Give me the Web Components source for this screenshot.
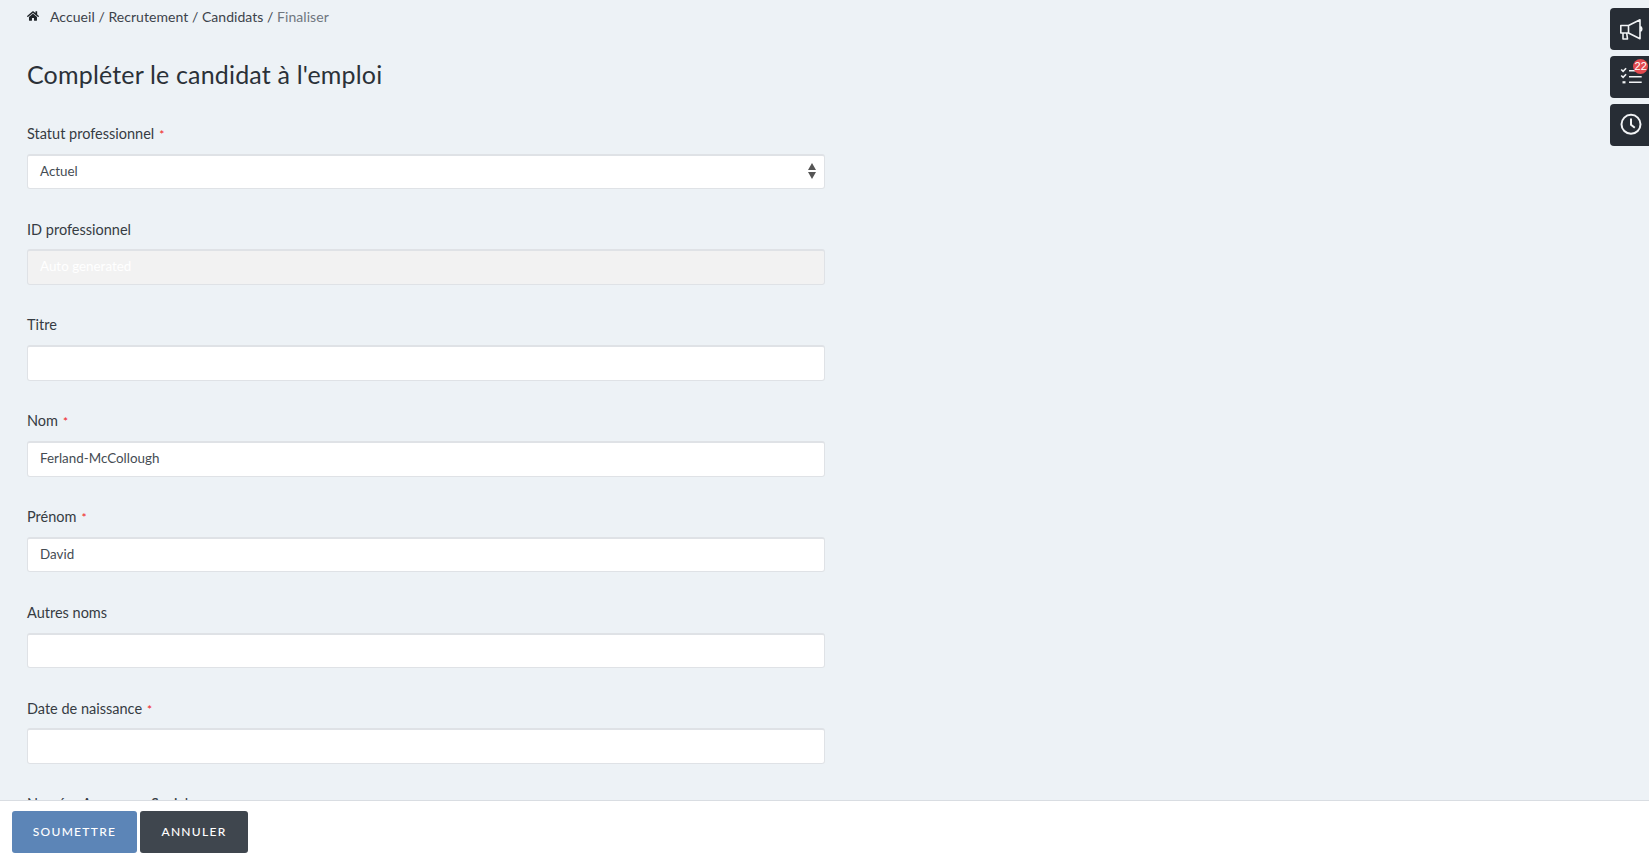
<!DOCTYPE html>
<html lang="fr"><head><meta charset="utf-8"><title>Compléter le candidat</title>
<style>
html,body{margin:0;height:100%;overflow:hidden;background:#edf2f6;font-family:Lato,"Open Sans",sans-serif;color:#2f353c}
</style></head><body>
<app-shell>
<bread-crumbs></bread-crumbs>
<h1>Compléter le candidat à l'emploi</h1>
<form-field label="Statut professionnel" required type="select" value="Actuel"></form-field>
<form-field label="ID professionnel" type="disabled" value="Auto generated"></form-field>
<form-field label="Titre"></form-field>
<form-field label="Nom" required value="Ferland-McCollough"></form-field>
<form-field label="Prénom" required value="David"></form-field>
<form-field label="Autres noms"></form-field>
<form-field label="Date de naissance" required></form-field>
<form-field label="Numéro Assurance Sociale"></form-field>
<side-tabs></side-tabs>
<action-bar></action-bar>
</app-shell>
<script>
const def=(n,html,init)=>customElements.define(n,class extends HTMLElement{connectedCallback(){if(this.shadowRoot)return;const r=this.attachShadow({mode:'open'});r.innerHTML=html;init&&init(this,r)}});
def('app-shell',`<style>:host{display:block;height:855px;overflow:hidden;position:relative}
main{display:flex;flex-direction:column;width:798px;padding:0 0 0 27px}
::slotted(h1){font:400 25px/30px Lato,sans-serif;margin:0 0 34.8px;letter-spacing:.17px;color:#2b3138}
</style><main><slot></slot></main>`);
def('bread-crumbs',`<style>:host{display:flex;align-items:center;height:32px;font-size:14px;letter-spacing:.05px;color:#3c434b;margin-bottom:27px}
svg{width:12px;height:12px;margin-right:11px;fill:#1f2428}.l{color:#6f767e}</style>
<svg viewBox="0 0 576 512"><path d="M280 148 95 300v164c0 9 7 16 16 16l112-.3c9 0 16-7 16-16V368c0-9 7-16 16-16h64c9 0 16 7 16 16v96c0 9 7 16 16 16l112 .3c9 0 16-7 16-16V300L296 148c-4-4-12-4-16 0zM572 251l-84-69V44c0-7-5-12-12-12h-56c-7 0-12 5-12 12v72l-90-74c-18-14-43-14-61 0L4 251c-5 4-6 12-2 17l26 31c4 5 12 6 17 2L280 107c4-4 12-4 16 0l235 194c5 4 13 3 17-2l26-31c4-6 3-13-2-17z"/></svg>
<span>Accueil / Recrutement / Candidats / <span class="l">Finaliser</span></span>`);
def('form-field',`<style>:host{display:block;height:95.8px}
.lab{font-size:14.5px;line-height:20px;height:20px;margin-bottom:9.8px;color:#363c43;display:flex;gap:5px}
.req{color:#f01818;font-size:12px;line-height:21px}
.box{box-sizing:border-box;height:35.6px;background:#fff;border:1px solid #dfe2e6;border-top-width:2px;border-radius:3px;padding:0 12px;font-size:13.4px;line-height:31.6px;color:#454c53;position:relative}
.box.disabled{background:#f2f2f2;color:#fff}
svg{position:absolute;right:8px;top:7px;width:8px;height:16px;fill:#555}
</style><div class="lab"><span id="t"></span><span class="req" id="r" hidden>*</span></div><div class="box" id="b"><span id="v"></span></div>`,(h,r)=>{
r.getElementById('t').textContent=h.getAttribute('label');
if(h.hasAttribute('required'))r.getElementById('r').hidden=false;
r.getElementById('v').textContent=h.getAttribute('value')||'';
const ty=h.getAttribute('type'),b=r.getElementById('b');
if(ty)b.classList.add(ty);
if(ty==='select')b.insertAdjacentHTML('beforeend','<svg viewBox="0 0 8 16"><path d="M4 0 8 7H0zM0 9h8l-4 7z"/></svg>');
});
def('side-tabs',`<style>:host{position:absolute;right:0;top:8px;display:flex;flex-direction:column;gap:6px;width:39px}
.t{height:42px;background:#272d35;border-radius:4px 0 0 4px;position:relative}
svg{display:block;width:39px;height:42px;fill:none;stroke:#f1f3f5;stroke-width:1.6}
.b{position:absolute;left:23.2px;top:3.2px;width:15px;height:15px;border-radius:50%;background:#e24a4f;color:#fff;font:400 11px/15px "Liberation Sans",sans-serif;text-align:center}
</style>
<div class="t"><svg viewBox="0 0 39 42"><path d="M10.8 17.500h7.700L30 11.800v19L18.500 25h-7.700zM18.500 17.500V25M13 25v6h4.500l-.8-6M30 18.500c2.400.4 2.400 4.600 0 5" stroke-linejoin="round"/></svg></div>
<div class="t"><svg viewBox="0 0 39 42"><path d="M11.200 13.500l1.900 1.900 3-3.200M11.200 19.500l1.900 1.900 3-3.200M19 14.700h12.700M19 20.700h12.700M19 26.300h12.700"/><path d="M12.500 26.300h3" stroke-width="2.200"/></svg><span class="b">22</span></div>
<div class="t"><svg viewBox="0 0 39 42"><circle cx="21" cy="20.300" r="9.500" stroke-width="2"/><path d="M21 14.500v6.300l3.800 3" stroke-width="2"/></svg></div>`);
def('action-bar',`<style>:host{position:absolute;left:0;right:0;bottom:0;height:55px;box-sizing:border-box;background:#fff;border-top:1px solid #d9dde2;display:flex;gap:3px;padding:10px 0 0 12px}
button{all:unset;box-sizing:border-box;height:42px;border-radius:3px;color:#fff;font:500 12px/42px Lato,sans-serif;letter-spacing:1.3px;text-align:center}
.a{width:125px;background:#5c85b7}.b{width:108px;background:#3f464e}</style>
<button class="a">SOUMETTRE</button><button class="b">ANNULER</button>`);
</script>
</body></html>
